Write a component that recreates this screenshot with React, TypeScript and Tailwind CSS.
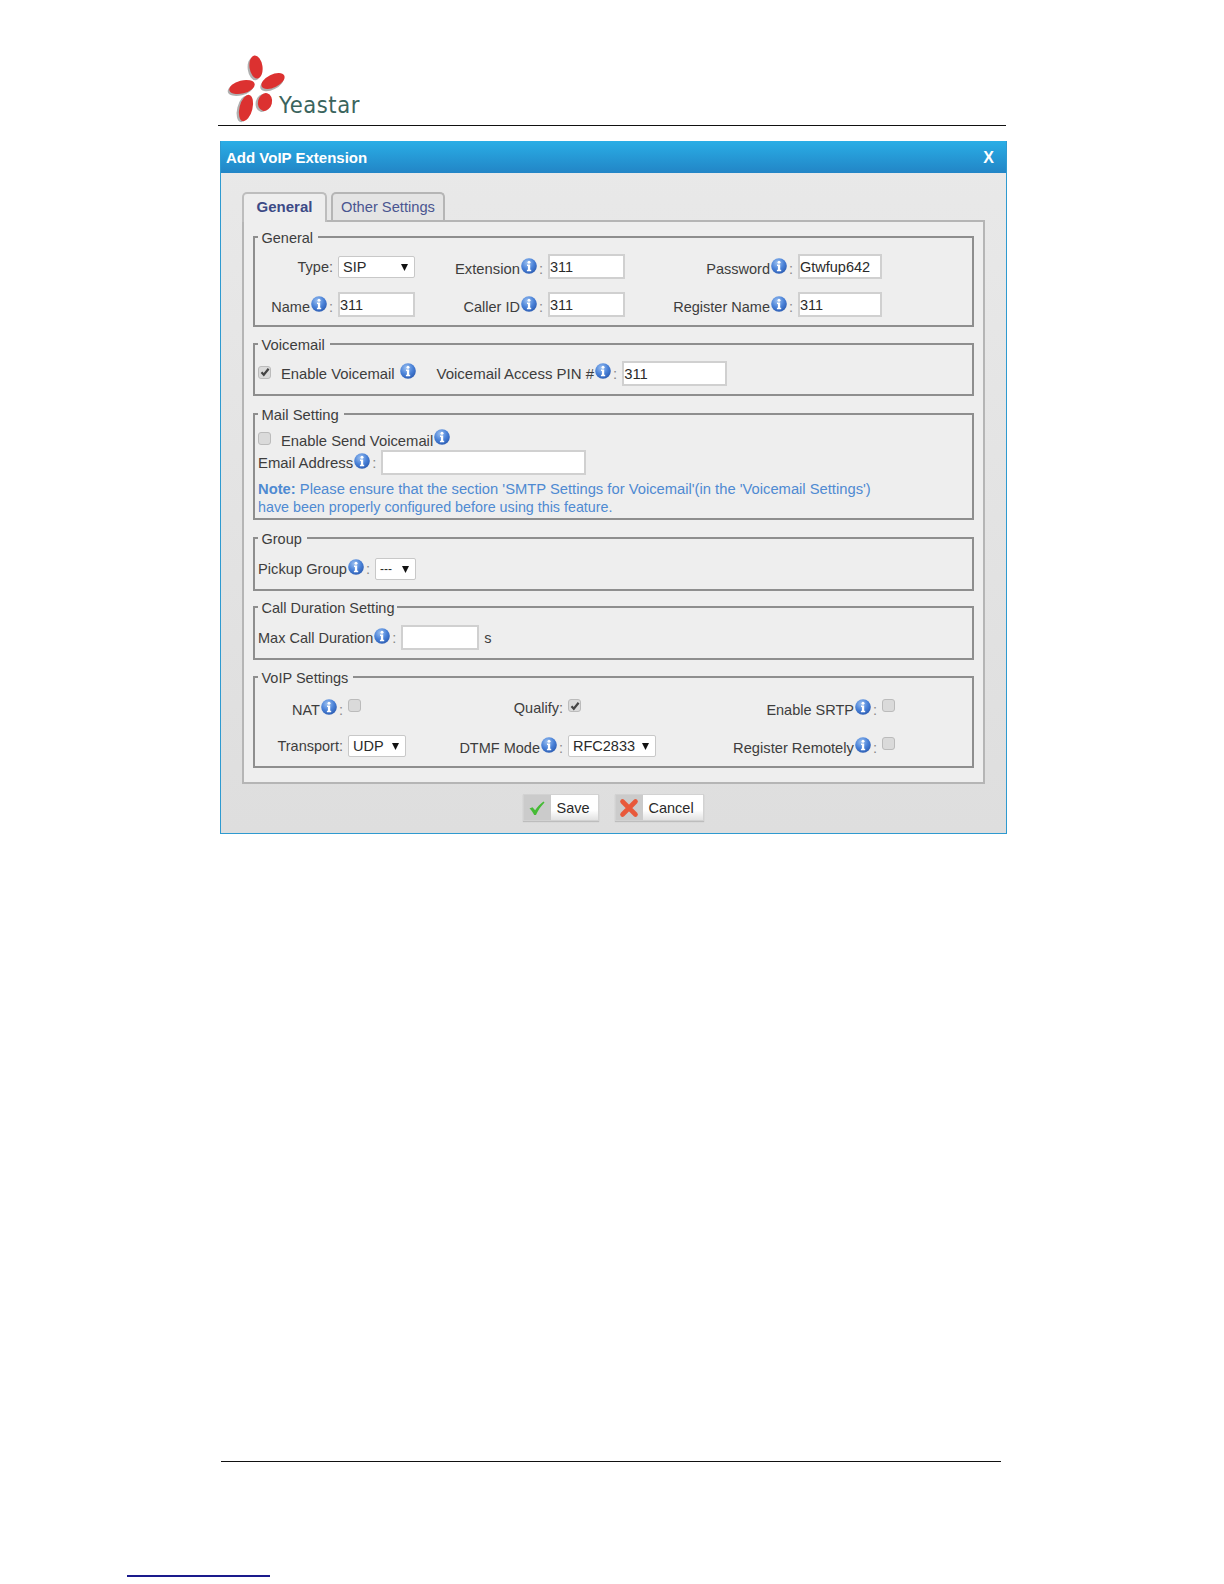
import React from 'react';

function Info({ className = '' }: { className?: string }) {
  return (
    <svg width="16" height="16" viewBox="0 0 16 16" className={`shrink-0 ${className}`}>
      <defs>
        <radialGradient id="infoBlue" cx="40%" cy="30%" r="75%">
          <stop offset="0%" stopColor="#9bc0f0" />
          <stop offset="55%" stopColor="#4a82d8" />
          <stop offset="100%" stopColor="#2a5ab0" />
        </radialGradient>
      </defs>
      <circle cx="8" cy="8" r="7.8" fill="url(#infoBlue)" />
      <circle cx="8" cy="4.2" r="1.5" fill="#fff" />
      <path d="M6 6.6h3.2v5.2h1v1.4H5.9v-1.4h1v-3.8H6z" fill="#fff" />
    </svg>
  );
}

function Label({ text, info = false, className = '' }: { text: string; info?: boolean; className?: string }) {
  return (
    <div className={`flex items-center justify-end pr-[5px] whitespace-nowrap text-[#3d3d3d] ${className}`}>
      <span className={info ? 'pt-[3px]' : ''}>{text}</span>
      {info && <Info className="ml-[1px] -mt-[3px]" />}
      <span className={info ? 'ml-[2px] pt-[3px] text-[#888]' : 'text-[#666]'}>:</span>
    </div>
  );
}

function TextBox({ value = '', className = '' }: { value?: string; className?: string }) {
  return (
    <input
      readOnly
      value={value}
      className={`block h-[25px] -mt-px bg-white border-2 border-[#d0d0d0] pl-0 text-[#2a2a2a] outline-none ${className}`}
    />
  );
}

function Select({ value, className = '' }: { value: string; className?: string }) {
  return (
    <div className={`flex h-[22px] items-center justify-between bg-white border border-[#c8c8c8] rounded-[2px] pl-[4px] pr-[6px] text-[#2a2a2a] ${className}`}>
      <span>{value}</span>
      <svg width="7" height="8" viewBox="0 0 7 8"><path d="M0 1h7L3.5 8z" fill="#111" /></svg>
    </div>
  );
}

function Check({ checked = false, className = '' }: { checked?: boolean; className?: string }) {
  return (
    <span className={`flex h-[13px] w-[13px] shrink-0 items-center justify-center rounded-[3px] border border-[#bbbbbb] bg-[#dadada] ${className}`}>
      {checked && (
        <svg width="10" height="10" viewBox="0 0 10 10">
          <path d="M1.5 5.2l2.3 2.6L8.6 1.8" fill="none" stroke="#444" strokeWidth="2.2" />
        </svg>
      )}
    </span>
  );
}

function Group({ title, className, legendClass = 'pr-[5px]', children }: { title: string; className: string; legendClass?: string; children: React.ReactNode }) {
  return (
    <fieldset className={`min-w-0 border-2 border-[#8e8e8e] ${className}`}>
      <legend className={`ml-[3px] pl-[3.5px] h-[20px] pt-[1px] leading-[20px] text-[#3d3d3d] ${legendClass}`}>{title}</legend>
      {children}
    </fieldset>
  );
}

function ActionButton({ text, icon, width }: { text: string; icon: React.ReactNode; width: string }) {
  return (
    <div className={`flex h-[27px] ${width} border border-[#d2d2d2] shadow-[0_1px_1px_rgba(0,0,0,0.15)]`}>
      <div className="flex w-[27px] items-center justify-center bg-[#cbcbcb]">{icon}</div>
      <div className="flex flex-1 items-center pl-[6px] bg-gradient-to-b from-white from-60% to-[#e2e2e2] text-[#2a2a2a]">{text}</div>
    </div>
  );
}

function Logo() {
  const petals = [
    { cx: 256, cy: 67, rx: 6.5, ry: 11.5, r: -8 },
    { cx: 242, cy: 87, rx: 13, ry: 6.5, r: -14 },
    { cx: 273, cy: 81, rx: 12.5, ry: 6.5, r: -26 },
    { cx: 246, cy: 108, rx: 6.5, ry: 13.5, r: 14 },
    { cx: 265, cy: 102, rx: 7, ry: 9, r: 14 },
  ];
  return (
    <svg width="70" height="76" viewBox="225 50 70 76" className="block">
      {petals.map((p, i) => (
        <g key={i} transform={`rotate(${p.r} ${p.cx} ${p.cy})`}>
          <ellipse cx={p.cx - 2} cy={p.cy + 1.5} rx={p.rx} ry={p.ry} fill="#b0b0b0" />
          <ellipse cx={p.cx} cy={p.cy} rx={p.rx} ry={p.ry} fill="#dc3130" />
        </g>
      ))}
    </svg>
  );
}

export default function App() {
  return (
    <div className="flex h-[1584px] w-[1224px] flex-col bg-white text-[14.5px] leading-[18px] font-['Liberation_Sans',Arial,sans-serif]">
      {/* Page header */}
      <div className="ml-[218px] w-[788px] h-[126px] pt-[50px] border-b-[1.5px] border-[#111] flex items-start">
        <div className="ml-[7px]"><Logo /></div>
        <span className="ml-[-16px] mt-[40px] origin-left scale-x-[0.92] text-[23px] leading-[30px] tracking-[0.6px] text-[#3a645d] font-['DejaVu_Sans',sans-serif]">Yeastar</span>
      </div>

      {/* Dialog */}
      <div className="ml-[220px] mt-[15px] w-[787px] h-[693px] border border-t-0 border-[#2e9ad0] bg-gradient-to-b from-[#e9e9e9] to-[#dedede]">
        <div className="flex h-[32px] items-center justify-between bg-gradient-to-b from-[#2aaee6] to-[#2285c6] pl-[5px] pr-[12px] pt-[1px] text-[15px] font-bold text-white">
          <span>Add VoIP Extension</span>
          <span className="text-[16px]">X</span>
        </div>

        <div className="px-[21px] pt-[19px]">
          {/* Tabs */}
          <div className="flex h-[28px] items-start gap-[4px] relative z-10">
            <div className="flex h-[30px] w-[85px] items-center justify-center rounded-t-[5px] border-2 border-b-0 border-[#bdbdbd] bg-[#eeeeee] pb-[2px] text-[15px] font-bold text-[#3c4a86]">General</div>
            <div className="flex h-[28px] w-[114px] items-center justify-center rounded-t-[5px] border-2 border-b-0 border-[#b5b5b5] bg-[#e4e4e4] pb-[1px] text-[14.7px] text-[#4a5590]">Other Settings</div>
          </div>

          {/* Tab panel */}
          <div className="h-[564px] border-2 border-[#b5b5b5] bg-[#eeeeee] px-[9px] pt-[5px]">
            <Group title="General" className="h-[100px]">
              <div className="grid grid-cols-[83px_77px_133px_77px_173px_84px] grid-rows-[24px_24px] gap-y-[14px] pt-[8px]">
                <Label text="Type" />
                <Select value="SIP" className="mt-[1px]" />
                <Label text="Extension" info className="text-[14.8px]" />
                <TextBox value="311" className="w-[77px]" />
                <Label text="Password" info />
                <TextBox value="Gtwfup642" className="w-[84px]" />
                <Label text="Name" info />
                <TextBox value="311" className="w-[77px]" />
                <Label text="Caller ID" info />
                <TextBox value="311" className="w-[77px]" />
                <Label text="Register Name" info />
                <TextBox value="311" className="w-[84px]" />
              </div>
            </Group>

            <Group title="Voicemail" className="mt-[7px] h-[62px] text-[14.8px]">
              <div className="flex h-[24px] items-center mt-[8px] pl-[3px] whitespace-nowrap text-[#3d3d3d]">
                <Check checked className="-mt-[4px]" />
                <span className="ml-[10px]">Enable Voicemail</span>
                <Info className="ml-[5px] -mt-[6px]" />
                <span className="ml-[21px] text-[15px]">Voicemail Access PIN #</span>
                <Info className="ml-[1px] -mt-[6px]" />
                <span className="ml-[2px] text-[#888]">:</span>
                <TextBox value="311" className="ml-[5px] w-[105px]" />
              </div>
            </Group>

            <Group title="Mail Setting" className="mt-[8px] h-[116px] text-[14.8px]">
              <div className="flex h-[18px] items-center mt-[6px] pl-[3px] text-[#3d3d3d]">
                <Check className="-mt-[2px]" />
                <span className="ml-[10px] pt-[3px]">Enable Send Voicemail</span>
                <Info className="ml-[1px] -mt-[4px]" />
              </div>
              <div className="flex h-[24px] items-center mt-[3px] pl-[3px] text-[#3d3d3d]">
                <span className="text-[14.9px]">Email Address</span>
                <Info className="ml-[1px] -mt-[4px]" />
                <span className="ml-[2px] text-[#888]">:</span>
                <TextBox className="ml-[5px] w-[205px]" />
              </div>
              <p className="mt-[5px] pl-[3px] text-[#4f8ad2] text-[14.75px]">
                <b>Note:</b> Please ensure that the section 'SMTP Settings for Voicemail'(in the 'Voicemail Settings')
                <br />
                <span className="text-[14.3px]">have been properly configured before using this feature.</span>
              </p>
            </Group>

            <Group title="Group" className="mt-[8px] h-[63px]">
              <div className="flex h-[22px] items-center mt-[10px] pl-[3px] text-[14.7px] text-[#3d3d3d]">
                <span>Pickup Group</span>
                <Info className="ml-[1px] -mt-[4px]" />
                <span className="ml-[2px] text-[#888]">:</span>
                <Select value="---" className="ml-[5px] w-[41px] text-[12px]" />
              </div>
            </Group>

            <Group title="Call Duration Setting" className="mt-[6px] h-[63px]" legendClass="pr-[2px]">
              <div className="flex h-[24px] items-center mt-[9px] pl-[3px] text-[#3d3d3d]">
                <span>Max Call Duration</span>
                <Info className="ml-[1px] -mt-[4px]" />
                <span className="ml-[2px] text-[#888]">:</span>
                <TextBox className="ml-[5px] w-[78px]" />
                <span className="ml-[5px]">s</span>
              </div>
            </Group>

            <Group title="VoIP Settings" className="mt-[7px] h-[101px]">
              <div className="grid grid-cols-[93px_58px_162px_88px_226px_20px] grid-rows-[22px_22px] gap-y-[16px] pt-[10px]">
                <Label text="NAT" info />
                <div className="pt-[2px]"><Check /></div>
                <Label text="Qualify" />
                <div className="pt-[2px]"><Check checked /></div>
                <Label text="Enable SRTP" info />
                <div className="pt-[2px]"><Check /></div>
                <Label text="Transport" />
                <Select value="UDP" />
                <Label text="DTMF Mode" info />
                <Select value="RFC2833" />
                <Label text="Register Remotely" info className="text-[14.7px]" />
                <div className="pt-[2px]"><Check /></div>
              </div>
            </Group>
          </div>

          {/* Save and Cancel */}
          <div className="mt-[10px] flex justify-center gap-[16px] pr-[1px]">
            <ActionButton
              text="Save"
              width="w-[76px]"
              icon={
                <svg width="18" height="16" viewBox="0 0 18 16">
                  <path d="M1.5 8.5l3-1.2 2.6 3C9.6 6.6 12 4 15.5 1.5l1 1C12.8 6.4 10.2 10 8 15H6.2C5 12.4 3.4 10.2 1.5 8.5z" fill="#45bb35" />
                </svg>
              }
            />
            <ActionButton
              text="Cancel"
              width="w-[89px]"
              icon={
                <svg width="20" height="20" viewBox="0 0 20 20">
                  <path d="M3.5 3.5L16.5 16.5M16.5 3.5L3.5 16.5" stroke="#e8583a" strokeWidth="4.6" strokeLinecap="round" />
                </svg>
              }
            />
          </div>
        </div>
      </div>

      {/* Page footer */}
      <div className="ml-[221px] mt-[627px] w-[780px] border-t-[1.5px] border-[#111]" />
      <div className="ml-[127px] mt-[113px] w-[143px] border-t-2 border-[#1a1a8c]" />
    </div>
  );
}
